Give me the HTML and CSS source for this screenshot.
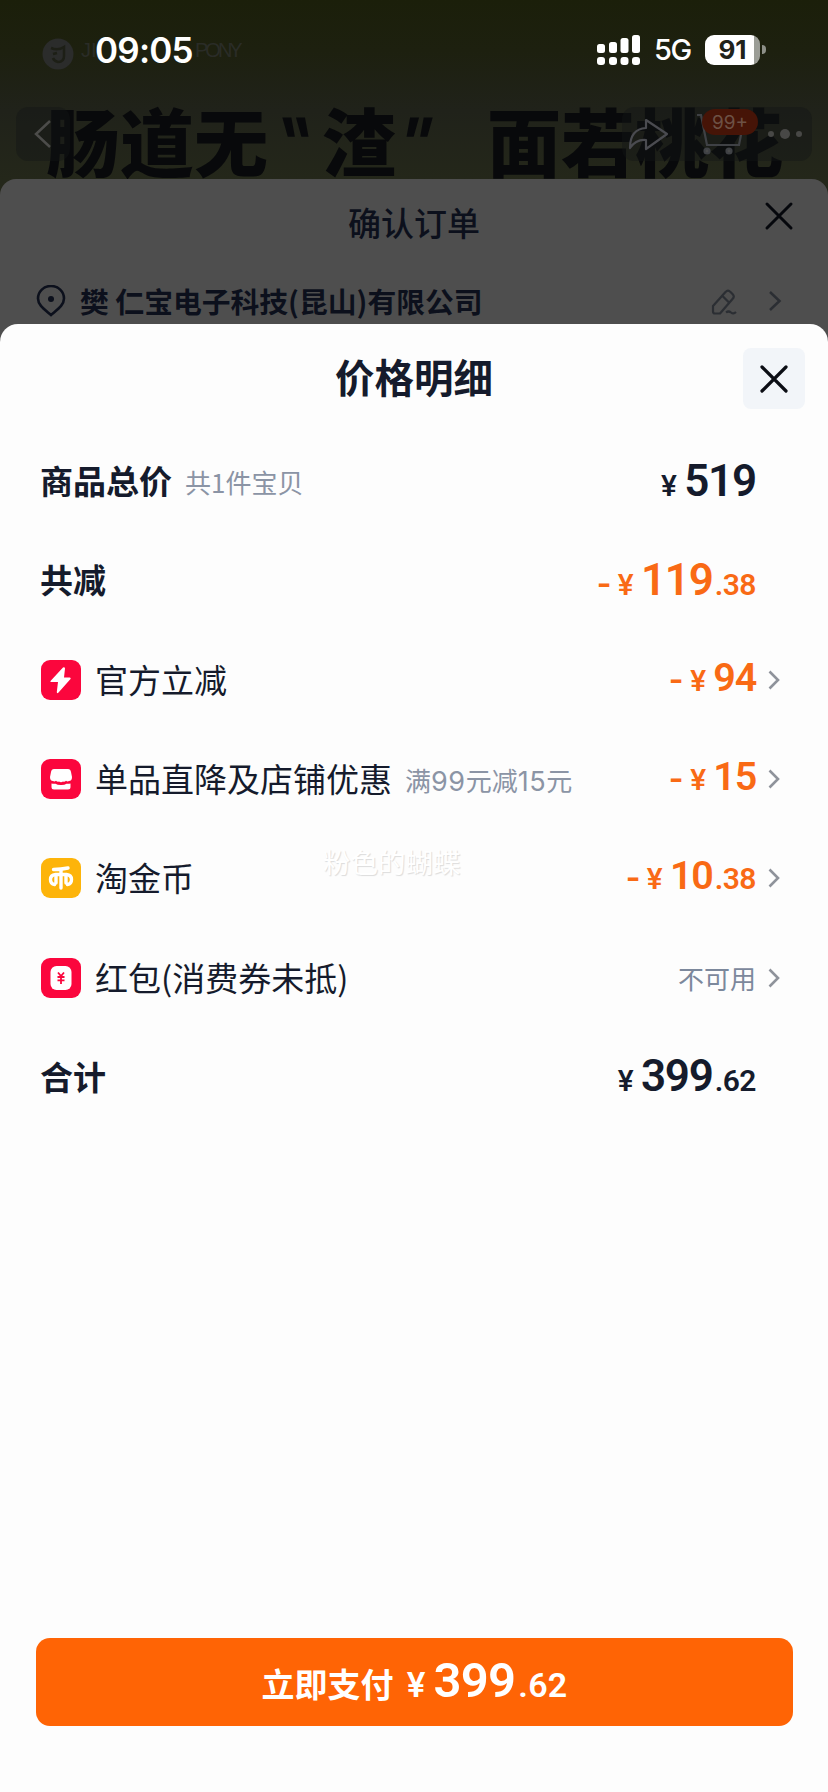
FILE: index.html
```html
<!DOCTYPE html>
<html lang="zh-CN">
<head>
<meta charset="utf-8">
<title>价格明细</title>
<link rel="stylesheet" href="styles.css">
</head>
<body>
<div class="screen">
  <div class="hero">
    <header class="status">
      <span class="time">09:05</span>
      <span class="status-right">
        <svg class="signal" width="44" height="30" viewBox="0 0 44 30" fill="#fff"><rect x="0" y="9" width="8" height="9" rx="2.5"/><rect x="12" y="7" width="8" height="11" rx="2.5"/><rect x="23.500" y="3" width="8" height="15" rx="2.500"/><rect x="35" y="0" width="8" height="18" rx="2.500"/><rect x="0" y="22" width="8" height="8" rx="3"/><rect x="12" y="22" width="8" height="8" rx="3"/><rect x="23.500" y="22" width="8" height="8" rx="3"/><rect x="35" y="22" width="8" height="8" rx="3"/></svg>
        <span class="net">5G</span>
        <span class="battery"><span class="level">91</span><i class="nub"></i></span>
      </span>
    </header>
    <div class="brand">
      <svg width="32" height="32" viewBox="0 0 32 32"><circle cx="16" cy="16" r="15.500" fill="#2b2c2b"/><path d="M9 10q7 3 13-1v9q0 6-6 6-4-1-5-4M11 16l4-1" fill="none" stroke="#1d1f16" stroke-width="2.500"/></svg>
      <span class="brand-name">JI</span><span class="brand-tail">PONY</span>
    </div>
    <div class="headline"><span class="h1">肠道无</span><span class="q ql">"</span><span class="h2">渣</span><span class="q qr">"</span><span class="h3">面若桃花</span></div>
    <nav class="nav">
      <span class="tile"><svg width="54" height="54" viewBox="0 0 54 54" fill="none" stroke="#4c4c4a" stroke-width="2.500"><path d="M34 14L20 27l14 13"/></svg></span>
      <span class="group">
        <svg width="70" height="54" viewBox="0 0 70 54" fill="none" stroke="#4a4b50" stroke-width="2.200" stroke-linejoin="round"><path d="M24 13L45 27 24 42V33Q14 32 8 41 8 22 24 21Z"/></svg>
        <svg width="66" height="54" viewBox="0 0 66 54" fill="none" stroke="#3f4145" stroke-width="2.200"><path d="M5 8h4l6 30h32l4-20"/><circle cx="15" cy="44" r="2.500" fill="#4a4b4b"/><circle cx="37" cy="44" r="2.500" fill="#4a4b4b"/></svg>
        <svg width="54" height="54" viewBox="0 0 54 54" fill="#484846"><circle cx="13" cy="27" r="3"/><circle cx="27" cy="27" r="5"/><circle cx="41" cy="27" r="3"/></svg>
        <span class="badge">99+</span>
      </span>
    </nav>
  </div>
  <section class="order">
    <div class="order-head"><h2>确认订单</h2>
      <svg class="order-close" width="30" height="30" viewBox="0 0 30 30" fill="none" stroke="#05070c" stroke-width="3" stroke-linecap="round"><path d="M3 3l24 24M27 3L3 27"/></svg>
    </div>
    <div class="address">
      <svg class="pin" width="30" height="32" viewBox="0 0 30 32" fill="none" stroke="#0c101c" stroke-width="2.600"><path d="M15 30C8 24 2 20 2 13.500a13 12.500 0 0 1 26 0C28 20 22 24 15 30Z"/><circle cx="15" cy="14" r="3" fill="#0c101c" stroke="none"/></svg>
      <span class="addr">樊 仁宝电子科技(昆山)有限公司</span>
      <svg class="edit" width="26" height="26" viewBox="0 0 26 26" fill="none" stroke="#2b2e33" stroke-width="2.200" stroke-linejoin="round"><path d="M2 17L14.500 3q2.500-2.500 5 0l2 2q2.500 2.500 0 5L9 24.500H4q-2 0-2-2ZM11.500 7l6.500 6.500M15 23.500q2.500-2 5 0t5-.5"/></svg>
      <svg class="go" width="14" height="22" viewBox="0 0 14 22" fill="none" stroke="#2b2e33" stroke-width="2.500"><path d="M2 2l9.500 9L2 20"/></svg>
    </div>
  </section>
  <main class="sheet">
    <div class="sheet-head"><h1>价格明细</h1>
      <button class="close" aria-label="关闭"><svg width="30" height="30" viewBox="0 0 30 30" fill="none" stroke="#0b0d14" stroke-width="3.200" stroke-linecap="round"><path d="M3 3l24 24M27 3L3 27"/></svg></button>
    </div>
    <div class="rows">
      <div class="row strong"><span class="label">商品总价</span><span class="note">共1件宝贝</span><span class="amount big"><span class="yen">¥</span><b>519</b></span></div>
      <div class="row strong"><span class="label">共减</span><span class="amount big off"><span class="minus">-</span><span class="yen">¥</span><b>119</b><small>.38</small></span></div>
      <div class="row"><svg class="icon" viewBox="0 0 40 40"><rect width="40" height="40" rx="9" fill="#fb063d"/><path d="M22 7.500L9.500 21q-.6 1 .6 1H17l-1.200 10q.2 2 1.500.8L29.500 19q.8-1.500-.8-1.500H23L24 8.500q-.3-2-2-1Z" fill="#fff"/></svg><span class="label">官方立减</span><span class="amount off"><span class="minus">-</span><span class="yen">¥</span><b>94</b></span><svg class="chev" viewBox="0 0 12 20"><path d="M1.500 1.500L10 10l-8.500 8.500"/></svg></div>
      <div class="row"><svg class="icon" viewBox="0 0 40 40"><rect width="40" height="40" rx="9" fill="#fb063d"/><path d="M13 10h14q2.500 0 3 3l1 5q0 4-3 4-1.500 1-3-.3-1.500 1.800-3 .8Q20 24 18 22.500q-1.500 1-3-.8-1.500 1.300-3 .3Q9 22 9 18l1-5q.5-3 3-3Z" fill="#fff"/><path d="M10.500 24.500q2 .5 4 .3 2 1.300 5.500 1.200 3.500.1 5.500-1.200 2 .2 4-.3V28q0 2.500-2.500 2.500H13q-2.500 0-2.500-2.500Z" fill="#fff"/></svg><span class="label">单品直降及店铺优惠</span><span class="note">满<i class="num">99</i>元减<i class="num">15</i>元</span><span class="amount off"><span class="minus">-</span><span class="yen">¥</span><b>15</b></span><svg class="chev" viewBox="0 0 12 20"><path d="M1.500 1.500L10 10l-8.500 8.500"/></svg></div>
      <div class="row"><svg class="icon" viewBox="0 0 40 40"><rect width="40" height="40" rx="9" fill="#fdb40a"/><path d="M12.500 11.500Q20 11.500 27 10M20 11v19M13.500 26.500Q9.500 26 9.500 21.500T14.500 16.500H25.500Q30.500 17 30.500 21.500t-4 5M15 17v8M25 17v8" fill="none" stroke="#fff" stroke-width="3.400" stroke-linecap="round"/></svg><span class="label">淘金币</span><span class="amount off"><span class="minus">-</span><span class="yen">¥</span><b>10</b><small>.38</small></span><svg class="chev" viewBox="0 0 12 20"><path d="M1.500 1.500L10 10l-8.500 8.500"/></svg></div>
      <div class="row"><svg class="icon" viewBox="0 0 40 40"><rect width="40" height="40" rx="9" fill="#fb063d"/><rect x="9.500" y="8" width="21" height="24" rx="6" fill="#fff"/><path d="M17 14.500l3 3.500 3-3.500M20 18v8M16.500 19h7M16.500 22.300h7" fill="none" stroke="#fb063d" stroke-width="1.800"/></svg><span class="label">红包(消费券未抵)</span><span class="na">不可用</span><svg class="chev" viewBox="0 0 12 20"><path d="M1.500 1.500L10 10l-8.500 8.500"/></svg></div>
      <div class="row strong"><span class="label">合计</span><span class="amount big"><span class="yen">¥</span><b>399</b><small>.62</small></span></div>
      <span class="watermark">粉色的蝴蝶</span>
    </div>
    <button class="pay"><span class="pay-label">立即支付</span><span class="yen">¥</span><b>399</b><small>.62</small></button>
  </main>
</div>
</body>
</html>
```
FILE: styles.css
```css
* { box-sizing: border-box; }
body { margin: 0; font-family: "Noto Sans CJK SC", sans-serif; color: #151b2c; }
h1, h2 { margin: 0; }
svg { display: block; flex: none; }
button { border: 0; padding: 0; font-family: inherit; }
.screen { position: relative; width: 828px; height: 1792px; overflow: hidden; display: flex; flex-direction: column; background: #4e4e4e; white-space: nowrap; }

.hero { position: relative; height: 200px; flex: none; background: linear-gradient(#1b1f0a 0, #1d200f 50px, #20221a 110px, #24271a 180px); }
.status { position: relative; z-index: 3; height: 99px; padding: 0 62px 0 95px; display: flex; align-items: center; justify-content: space-between; color: #fff; font-family: Inter, sans-serif; }
.time { font-size: 35px; font-weight: 600; letter-spacing: -.8px; }
.status-right { display: flex; align-items: center; }
.net { margin-left: 13px; font-size: 29px; font-weight: 500; width: 38px; letter-spacing: -1.500px; }
.battery { margin-left: 13px; display: flex; align-items: center; }
.level { width: 55px; height: 30px; border-radius: 9px; background: linear-gradient(90deg, #fff 49px, #9b9d96 49px); color: #20221a; font-size: 26px; font-weight: 700; line-height: 30px; text-align: center; }
.nub { width: 4px; height: 9px; margin-left: 2px; border-radius: 0 5px 5px 0; background: #8d8f88; }
.brand { position: absolute; left: 42px; top: 38px; display: flex; color: #2a2c27; font: 20px/24px "Liberation Sans", sans-serif; }
.brand-name { width: 20px; margin-left: 7px; }
.brand-tail { margin-left: 94px; letter-spacing: -3px; }
.headline { position: absolute; left: 46px; top: 101px; display: flex; font-size: 74px; line-height: 76px; font-weight: 900; color: #08090b; }
.h1 { width: 222px; }
.q { width: 54px; text-align: center; font: 700 64px/80px Inter, sans-serif; }
.ql { padding-left: 8px; transform: skewX(13deg); }
.qr { padding-right: 14px; transform: skewX(-13deg); }
.h3 { margin-left: 37px; }
.nav { position: absolute; left: 16px; right: 16px; top: 107px; display: flex; justify-content: space-between; }
.tile, .group { background: rgba(20, 21, 21, .42); border-radius: 12px; }
.group { position: relative; display: flex; }
.badge { position: absolute; left: 80px; top: 2px; width: 56px; height: 26px; border-radius: 13px; background: #461407; color: #6d5145; font: 19px/27px Inter, sans-serif; text-align: center; }

.order { position: relative; z-index: 2; height: 170px; margin-top: -21px; flex: none; border-radius: 16px 16px 0 0; background: #4e4e4e; color: #0c101c; }
.order-head { height: 90px; display: flex; justify-content: center; align-items: flex-start; position: relative; padding-top: 23px; }
.order h2 { font-size: 33px; line-height: 40px; font-weight: 500; }
.order-close { position: absolute; right: 34px; top: 22px; }
.address { padding: 0 46px 0 36px; height: 64px; display: flex; align-items: center; }
.addr { margin-left: 14px; font-size: 28.800px; line-height: 40px; font-weight: 700; flex: 1; }
.edit { margin-top: 2px; }
.go { margin-left: 31px; }

.sheet { position: relative; z-index: 3; margin-top: -25px; height: 1468px; flex: none; border-radius: 18px 18px 0 0; background: #fdfdfd; display: flex; flex-direction: column; }
.sheet-head { height: 108px; position: relative; display: flex; align-items: flex-start; justify-content: center; padding-top: 27px; }
h1 { font-size: 39.500px; line-height: 50px; font-weight: 700; }
.close { position: absolute; right: 23px; top: 24px; width: 62px; height: 61px; border-radius: 8px; background: #f2f5f9; display: grid; place-items: center; }
.rows { position: relative; display: grid; grid-auto-rows: 99.300px; }
.row { display: flex; align-items: center; padding: 0 48px 0 41px; }
.icon { width: 40px; height: 40px; margin: 0 14px 1px 0; }
.label { font-size: 33px; padding-bottom: 3px; }
.strong .label { font-weight: 700; margin-left: -1px; }
.strong { padding-right: 72px; }
.note { margin-left: 13px; font-size: 26px; color: #8b94a5; }
.num { font: 27px/1 Inter, sans-serif; letter-spacing: .6px; }
.na { margin-left: auto; padding-bottom: 2px; font-size: 26px; color: #7c889c; }
.chev { width: 12px; height: 20px; margin: 0 0 1px 12px; fill: none; stroke: #8f939b; stroke-width: 2.600; }
.amount { margin-left: auto; padding-bottom: 6px; display: flex; align-items: baseline; font-family: Roboto, sans-serif; font-weight: 600; }
.big { padding-bottom: 2px; }
.amount b { font-size: 39.500px; font-weight: 600; letter-spacing: -1.200px; }
.amount.big b { font-size: 44px; letter-spacing: -1.200px; }
.amount small { font-size: 30px; letter-spacing: -.5px; margin-left: 2px; }
.yen { font: 600 29px/1 Inter, sans-serif; margin-right: 7px; }
.minus { font-size: 34px; margin-right: 7px; transform: scaleX(1.150); }
.off { color: #f96a15; }
.watermark { position: absolute; left: 323px; top: 410px; font-size: 27.500px; line-height: 38px; color: #fff; text-shadow: 1px 1px 1px #dcdcdc; }
.pay { margin: auto 35px 66px 36px; height: 88px; padding-bottom: 2px; border-radius: 14px; background: #ff6405; color: #fff; display: flex; align-items: baseline; justify-content: center; line-height: 86px; font-family: Roboto, sans-serif; font-weight: 600; }
.pay-label { font-family: "Noto Sans CJK SC", sans-serif; font-size: 33px; font-weight: 700; margin-right: 13px; }
.pay .yen { font-size: 34px; margin-right: 8px; }
.pay b { font-size: 49px; font-weight: 600; letter-spacing: -.8px; }
.pay small { font-size: 34px; margin-left: 3px; letter-spacing: .3px; }
```
